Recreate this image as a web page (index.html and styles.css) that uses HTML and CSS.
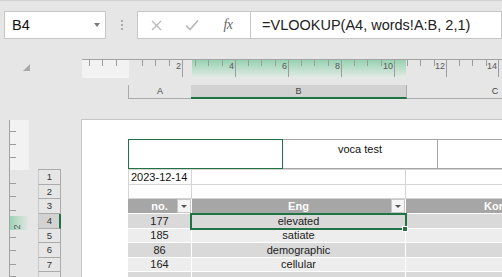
FILE: index.html
```html
<!DOCTYPE html>
<html lang="en">
<head>
  <meta charset="UTF-8">
  <title>voca test</title>
  <link rel="stylesheet" href="styles.css">
</head>
<body>

  <div class="fbar">
    <div class="namebox"><span>B4</span><span class="caret"></span></div>
    <div class="grip"><i></i><i></i><i></i></div>
    <div class="fbtns">
      <span class="fbtn">
        <svg width="11" height="11" viewBox="0 0 11 11"><path d="M1 1L10 10M10 1L1 10" stroke="#b8b8b8" stroke-width="1.3" fill="none"/></svg>
      </span>
      <span class="fbtn">
        <svg width="14" height="12" viewBox="0 0 14 12"><path d="M1 6.5L5 10.5L13 1.5" stroke="#b8b8b8" stroke-width="1.6" fill="none"/></svg>
      </span>
      <span class="fbtn fx">fx</span>
    </div>
    <div class="formula">=VLOOKUP(A4, words!A:B, 2,1)</div>
  </div>

  <div class="rulerbar">
    <div class="corner">
      <svg class="selall" width="7" height="7" viewBox="0 0 7 7"><path d="M7 0V7H0Z" fill="#a9a9a9"/></svg>
    </div>
    <div class="hruler">
      <svg width="420" height="19" viewBox="0 0 420 19">
        <defs>
          <linearGradient id="hg" x1="0" y1="0" x2="0" y2="1">
            <stop offset="0" stop-color="#97d2b1"/>
            <stop offset="1" stop-color="#e5ebe8"/>
          </linearGradient>
        </defs>
        <rect x="0" y="1" width="47" height="18" fill="#f2f2f2"/>
        <rect x="110" y="1" width="214" height="18" fill="url(#hg)"/>
        <line x1="0" y1="0.5" x2="420" y2="0.5" stroke="#a3a3a3"/>
        <g stroke="#9c9c9c">
          <line x1="7.5" y1="1" x2="7.5" y2="7"/>
          <line x1="20.5" y1="1" x2="20.5" y2="7"/>
          <line x1="34.5" y1="1" x2="34.5" y2="7"/>
          <line x1="60.5" y1="1" x2="60.5" y2="7"/>
          <line x1="73.5" y1="1" x2="73.5" y2="7"/>
          <line x1="87.5" y1="1" x2="87.5" y2="7"/>
          <line x1="100.5" y1="1" x2="100.5" y2="18"/>
          <line x1="113.5" y1="1" x2="113.5" y2="7"/>
          <line x1="126.5" y1="1" x2="126.5" y2="7"/>
          <line x1="140.5" y1="1" x2="140.5" y2="7"/>
          <line x1="153.5" y1="1" x2="153.5" y2="18"/>
          <line x1="166.5" y1="1" x2="166.5" y2="7"/>
          <line x1="179.5" y1="1" x2="179.5" y2="7"/>
          <line x1="193.5" y1="1" x2="193.5" y2="7"/>
          <line x1="206.5" y1="1" x2="206.5" y2="18"/>
          <line x1="219.5" y1="1" x2="219.5" y2="7"/>
          <line x1="232.5" y1="1" x2="232.5" y2="7"/>
          <line x1="246.5" y1="1" x2="246.5" y2="7"/>
          <line x1="259.5" y1="1" x2="259.5" y2="18"/>
          <line x1="272.5" y1="1" x2="272.5" y2="7"/>
          <line x1="285.5" y1="1" x2="285.5" y2="7"/>
          <line x1="299.5" y1="1" x2="299.5" y2="7"/>
          <line x1="312.5" y1="1" x2="312.5" y2="18"/>
          <line x1="325.5" y1="1" x2="325.5" y2="7"/>
          <line x1="338.5" y1="1" x2="338.5" y2="7"/>
          <line x1="352.5" y1="1" x2="352.5" y2="7"/>
          <line x1="364.5" y1="1" x2="364.5" y2="18"/>
          <line x1="377.5" y1="1" x2="377.5" y2="7"/>
          <line x1="390.5" y1="1" x2="390.5" y2="7"/>
          <line x1="404.5" y1="1" x2="404.5" y2="7"/>
          <line x1="416.5" y1="1" x2="416.5" y2="18"/>
        </g>
        <g class="rlabel" text-anchor="end">
          <text x="99" y="9.5">2</text>
          <text x="152" y="9.5">4</text>
          <text x="205" y="9.5">6</text>
          <text x="258" y="9.5">8</text>
          <text x="311" y="9.5">10</text>
          <text x="363" y="9.5">12</text>
          <text x="415" y="9.5">14</text>
        </g>
      </svg>
    </div>
  </div>

  <div class="colheads">
    <div class="ch ch-a">A</div>
    <div class="ch ch-b">B</div>
    <div class="ch ch-c">C</div>
  </div>

  <div class="main">
    <div class="vruler">
      <svg width="20" height="157" viewBox="0 0 20 157">
        <defs>
          <linearGradient id="vg" x1="0" y1="0" x2="1" y2="0">
            <stop offset="0" stop-color="#9bd3b4"/>
            <stop offset="1" stop-color="#e6e6e6"/>
          </linearGradient>
        </defs>
        <rect x="1" y="0" width="19" height="50" fill="#f2f2f2"/>
        <rect x="1" y="96" width="19" height="14" fill="url(#vg)"/>
        <line x1="0.5" y1="0" x2="0.5" y2="157" stroke="#a3a3a3"/>
        <g stroke="#9c9c9c">
          <line x1="1" y1="11.5" x2="7" y2="11.5"/>
          <line x1="1" y1="24.5" x2="7" y2="24.5"/>
          <line x1="1" y1="37.5" x2="7" y2="37.5"/>
          <line x1="1" y1="63.5" x2="7" y2="63.5"/>
          <line x1="1" y1="76.5" x2="7" y2="76.5"/>
          <line x1="1" y1="90.5" x2="7" y2="90.5"/>
          <line x1="1" y1="117.5" x2="7" y2="117.5"/>
          <line x1="1" y1="130.5" x2="7" y2="130.5"/>
          <line x1="1" y1="144.5" x2="7" y2="144.5"/>
          <line x1="1" y1="156.5" x2="7" y2="156.5"/>
        </g>
        <text class="rlabel" transform="translate(10.5 107) rotate(-90)" text-anchor="middle">2</text>
      </svg>
    </div>

    <div class="rowheads">
      <div class="rh h15">1</div>
      <div class="rh h14">2</div>
      <div class="rh h15">3</div>
      <div class="rh h15 cur">4</div>
      <div class="rh h14">5</div>
      <div class="rh h15">6</div>
      <div class="rh h14">7</div>
      <div class="rh h15"></div>
    </div>

    <div class="page">
      <div class="title">
        <div class="t1"></div>
        <div class="t2">voca test</div>
        <div class="t3"></div>
      </div>

      <div class="rows">
        <div class="row plain h15">
          <div class="a">2023-12-14</div><div class="b"></div><div class="c"></div>
        </div>
        <div class="row plain h14">
          <div class="a"></div><div class="b"></div><div class="c"></div>
        </div>
        <div class="row thead h15">
          <div class="a">no.<span class="filter"><i></i></span></div>
          <div class="b">Eng<span class="filter"><i></i></span></div>
          <div class="c">Kor</div>
        </div>
        <div class="row dark h15">
          <div class="a">177</div><div class="b">elevated</div><div class="c"></div>
        </div>
        <div class="row light h14">
          <div class="a">185</div><div class="b">satiate</div><div class="c"></div>
        </div>
        <div class="row dark h15">
          <div class="a">86</div><div class="b">demographic</div><div class="c"></div>
        </div>
        <div class="row light h14">
          <div class="a">164</div><div class="b">cellular</div><div class="c"></div>
        </div>
        <div class="row dark h15">
          <div class="a"></div><div class="b"></div><div class="c"></div>
        </div>

        <div class="sel"></div>
        <div class="handle"></div>
      </div>
    </div>
  </div>

</body>
</html>
```

FILE: styles.css
```css
* {
  box-sizing: border-box;
}
body {
  margin: 0;
  width: 502px;
  height: 277px;
  overflow: hidden;
  background: #e6e6e6;
  border-top: 1px solid #d0d0d0;
  font-family: "Liberation Sans", Arial, sans-serif;
}

/* formula bar */
.fbar {
  display: flex;
  height: 38px;
  padding: 10px 0 0 4px;
}
.namebox {
  width: 102px;
  height: 28px;
  border: 1px solid #c6c6c6;
  background: #fff;
  display: flex;
  align-items: center;
  justify-content: space-between;
  padding: 0 5px 0 7px;
  font-size: 14.5px;
  color: #111;
}
.caret {
  width: 0;
  height: 0;
  border-left: 3.5px solid transparent;
  border-right: 3.5px solid transparent;
  border-top: 4px solid #7a7a7a;
}
.grip {
  width: 31px;
  display: flex;
  flex-direction: column;
  align-items: center;
  justify-content: center;
  gap: 2px;
}
.grip i {
  width: 2px;
  height: 2px;
  background: #ababab;
}
.fbtns {
  width: 113px;
  height: 28px;
  border: 1px solid #c6c6c6;
  border-right: 0;
  background: #fff;
  display: flex;
  align-items: center;
}
.fbtn {
  width: 36px;
  display: flex;
  justify-content: center;
}
.fbtn svg {
  display: block;
}
.fx {
  font-family: "Liberation Serif", serif;
  font-style: italic;
  font-size: 14px;
  color: #666;
  letter-spacing: -0.5px;
}
.formula {
  flex: 1;
  min-width: 0;
  overflow: hidden;
  height: 28px;
  border: 1px solid #c6c6c6;
  background: #fff;
  padding-left: 11px;
  font-size: 14.5px;
  line-height: 26px;
  color: #222;
  white-space: nowrap;
}

/* rulers */
.rulerbar {
  display: flex;
  height: 19px;
  margin-top: 20px;
}
.corner {
  width: 82px;
  flex: none;
}
.selall {
  display: block;
  margin: 5px 0 0 23px;
}
.hruler {
  flex: 1;
  min-width: 0;
  overflow: hidden;
}
.hruler svg,
.vruler svg {
  display: block;
}
.rlabel {
  font-family: "Liberation Sans", Arial, sans-serif;
  font-size: 9px;
  fill: #595959;
}

/* column headers */
.colheads {
  display: flex;
  height: 14px;
  margin: 7px 0 0 128px;
  overflow: hidden;
  font-size: 9px;
  color: #444;
  line-height: 13px;
  text-align: center;
}
.ch {
  flex: none;
}
.ch-a {
  width: 63px;
  border-left: 1px solid #ababab;
  border-bottom: 1px solid #ababab;
}
.ch-b {
  width: 216px;
  background: #d2d2d2;
  border-right: 1px solid #ababab;
  border-bottom: 2px solid #217346;
  line-height: 12px;
}
.ch-c {
  width: 176px;
  border-bottom: 1px solid #ababab;
}

/* sheet area */
.main {
  display: flex;
  height: 178px;
}
.vruler {
  width: 20px;
  flex: none;
  margin: 21px 0 0 9px;
}
.rowheads {
  width: 23px;
  flex: none;
  margin: 70px 0 0 9px;
  border-top: 1px solid #ababab;
}
.rh {
  border-left: 1px solid #c8c8c8;
  border-right: 1px solid #ababab;
  border-bottom: 1px solid #ababab;
  font-size: 9.5px;
  color: #333;
  text-align: center;
}
.rh.cur {
  background: #d2d2d2;
  border-right: 2px solid #217346;
  padding-left: 1px;
}
.h15 {
  height: 15px;
  line-height: 14px;
}
.h14 {
  height: 14px;
  line-height: 13px;
}
.page {
  flex: 1;
  min-width: 0;
  overflow: hidden;
  margin: 20px 0 0 20px;
  background: #fff;
  border-top: 1px solid #c6c6c6;
  border-left: 1px solid #c6c6c6;
  padding: 19px 0 0 46px;
}

.title {
  display: flex;
  height: 30px;
}
.t1 {
  width: 155px;
  flex: none;
  border: 1px solid #217346;
}
.t2 {
  width: 155px;
  flex: none;
  border: 1px solid #a6a6a6;
  border-left: 0;
  text-align: center;
  font-size: 11px;
  line-height: 13px;
  padding-top: 3px;
  color: #111;
}
.t3 {
  width: 150px;
  flex: none;
  border-top: 1px solid #a6a6a6;
  border-bottom: 1px solid #a6a6a6;
}

.rows {
  position: relative;
  width: 454px;
  border-top: 1px solid #d4d4d4;
}
.row {
  display: flex;
}
.row > div {
  flex: none;
  position: relative;
  border-right: 1px solid #fff;
  border-bottom: 1px solid #fff;
  text-align: center;
  font-size: 11px;
  color: #222;
  white-space: nowrap;
}
.a {
  width: 64px;
}
.b {
  width: 214px;
}
.c {
  width: 176px;
}
.plain > div {
  border-color: #d4d4d4;
}
.plain .a {
  border-left: 1px solid #d4d4d4;
  text-align: left;
  padding-left: 2px;
  color: #111;
}
.thead > div {
  background: #a6a6a6;
  color: #fff;
  font-weight: bold;
}
.dark > div {
  background: #d9d9d9;
}
.light > div {
  background: #ededed;
}
.filter {
  position: absolute;
  right: 0;
  top: 0;
  width: 14px;
  height: 14px;
  background: #f4f4f4;
  border: 1px solid #c6c6c6;
  display: flex;
  align-items: center;
  justify-content: center;
}
.filter i {
  width: 0;
  height: 0;
  border-left: 3px solid transparent;
  border-right: 3px solid transparent;
  border-top: 3px solid #555;
}
.sel {
  position: absolute;
  left: 62px;
  top: 43px;
  width: 217px;
  height: 17px;
  border: 2px solid #217346;
}
.handle {
  position: absolute;
  left: 274px;
  top: 56px;
  width: 6px;
  height: 6px;
  background: #217346;
  border: 1px solid #fff;
}
```
